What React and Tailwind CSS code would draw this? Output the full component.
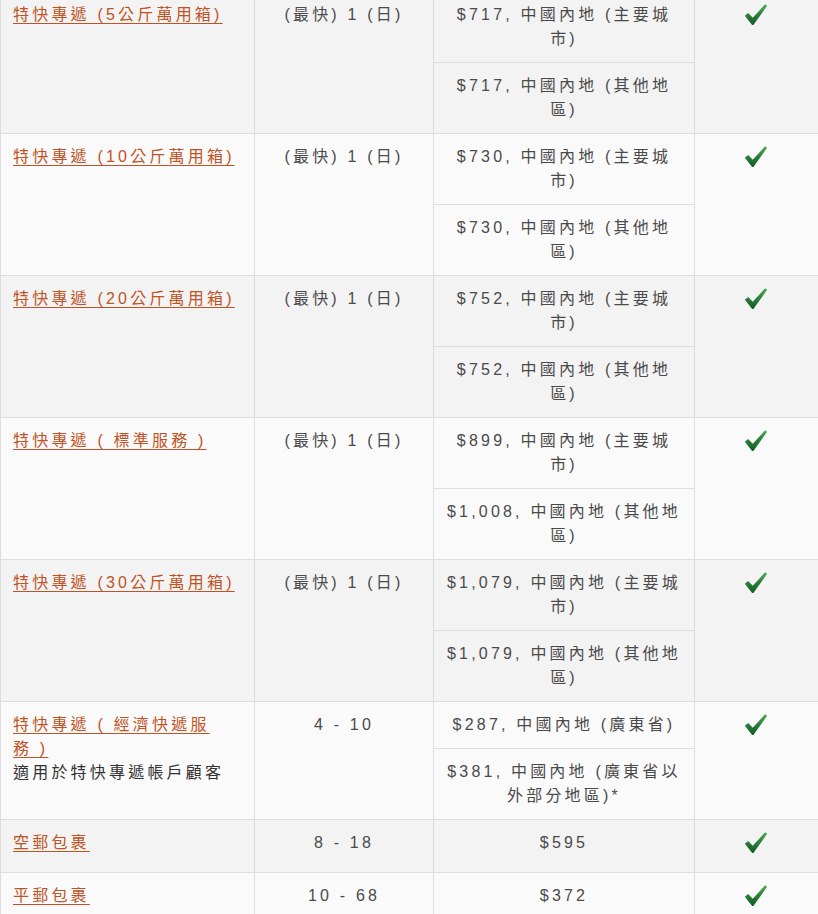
import React from "react";

const rows = [
  {
    name: ["特快專遞 (5公斤萬用箱)"],
    time: "(最快) 1 (日)",
    prices: [["$717, 中國內地 (主要城", "市)"], ["$717, 中國內地 (其他地", "區)"]],
  },
  {
    name: ["特快專遞 (10公斤萬用箱)"],
    time: "(最快) 1 (日)",
    prices: [["$730, 中國內地 (主要城", "市)"], ["$730, 中國內地 (其他地", "區)"]],
  },
  {
    name: ["特快專遞 (20公斤萬用箱)"],
    time: "(最快) 1 (日)",
    prices: [["$752, 中國內地 (主要城", "市)"], ["$752, 中國內地 (其他地", "區)"]],
  },
  {
    name: ["特快專遞 ( 標準服務 )"],
    time: "(最快) 1 (日)",
    prices: [["$899, 中國內地 (主要城", "市)"], ["$1,008, 中國內地 (其他地", "區)"]],
  },
  {
    name: ["特快專遞 (30公斤萬用箱)"],
    time: "(最快) 1 (日)",
    prices: [["$1,079, 中國內地 (主要城", "市)"], ["$1,079, 中國內地 (其他地", "區)"]],
  },
  {
    name: ["特快專遞 ( 經濟快遞服", "務 )"],
    note: "適用於特快專遞帳戶顧客",
    time: "4 - 10",
    prices: [["$287, 中國內地 (廣東省)"], ["$381, 中國內地 (廣東省以", "外部分地區)*"]],
  },
  { name: ["空郵包裹"], time: "8 - 18", prices: [["$595"]] },
  { name: ["平郵包裹"], time: "10 - 68", prices: [["$372"]] },
];

function Check() {
  return (
    <div className="h-[30px] flex justify-center items-start pr-[1px]">
      <svg width="24" height="23" viewBox="0 0 23 22">
        <defs>
          <linearGradient id="cg" x1="0" y1="0" x2="0" y2="1">
            <stop offset="0" stopColor="#4fae57" />
            <stop offset="0.5" stopColor="#2a7f39" />
            <stop offset="1" stopColor="#145a26" />
          </linearGradient>
        </defs>
        <path
          d="M0.8 12.2 L4 9.6 L8.4 14 L20.2 1.2 L22.2 2.6 L9 21 L7.8 21 Z"
          fill="url(#cg)"
        />
      </svg>
    </div>
  );
}

function Lines({ lines }) {
  return lines.map((l, i) => (
    <React.Fragment key={i}>
      {i > 0 && <br />}
      {l}
    </React.Fragment>
  ));
}

export default function App() {
  const td = "border border-[#dddddd] align-top px-[11px] py-[11px]";
  return (
    <div className="w-[818px] overflow-hidden bg-white">
      <table className="mt-[-9px] w-[818px] table-fixed border-collapse font-['Liberation_Sans','Noto_Sans_CJK_TC',sans-serif] text-[16px] leading-[24px] tracking-[3.2px] text-[#4a4a4a]">
        <colgroup>
          <col className="w-[254px]" />
          <col className="w-[179px]" />
          <col className="w-[261px]" />
          <col className="w-[124px]" />
        </colgroup>
        <tbody>
          {rows.map((r, ri) => {
            const bg = ri % 2 === 0 ? "bg-[#f3f3f3]" : "bg-[#fafafa]";
            const span = r.prices.length;
            return r.prices.map((p, pi) => (
              <tr key={ri + "-" + pi} className={bg}>
                {pi === 0 && (
                  <td rowSpan={span} className={td + " pl-[12px]"}>
                    <a className="text-[#bf5325] underline underline-offset-[3px] decoration-[1px]">
                      <Lines lines={r.name} />
                    </a>
                    {r.note && (
                      <div className="text-[#333333]">{r.note}</div>
                    )}
                  </td>
                )}
                {pi === 0 && (
                  <td rowSpan={span} className={td + " text-center"}>
                    {r.time}
                  </td>
                )}
                <td className={td + " text-center px-[10px]"}>
                  <Lines lines={p} />
                </td>
                {pi === 0 && (
                  <td rowSpan={span} className={td + " text-center"}>
                    <Check />
                  </td>
                )}
              </tr>
            ));
          })}
        </tbody>
      </table>
    </div>
  );
}
